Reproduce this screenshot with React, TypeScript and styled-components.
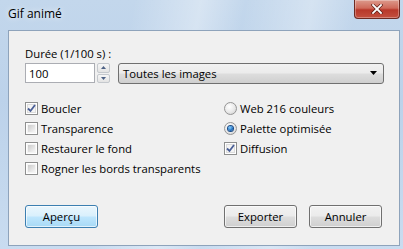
import styled, { createGlobalStyle, css } from 'styled-components'

const GlobalStyle = createGlobalStyle`
   html, body {
      margin: 0;
      padding: 0;
      background: #c4d8ee;
   }
   body {
      font-family: 'Open Sans', 'Noto Sans', sans-serif;
      font-size: 11.3px;
      color: #000;
   }
`

const Window = styled.div`
   width: 403px;
   height: 249px;
   display: flex;
   flex-direction: column;
   box-sizing: border-box;
   padding: 0 3px 3px 8px;
   background:
      linear-gradient(100deg, transparent 30%, rgba(255, 255, 255, 0.35) 45%, transparent 55%, rgba(255, 255, 255, 0.3) 70%, transparent 80%),
      linear-gradient(180deg, #c3d7ec 0%, #bcd2ea 40%, #c9dcf0 100%);
`

const TitleBar = styled.div`
   height: 30px;
   display: flex;
   align-items: flex-start;
   justify-content: space-between;
   flex-shrink: 0;
`

const Title = styled.span`
   margin-top: 5px;
   font-size: 12px;
   color: #000;
   text-shadow: 0 0 6px rgba(255, 255, 255, 0.9);
`

const CloseButton = styled.div`
   width: 46px;
   height: 19px;
   box-sizing: border-box;
   border: 1px solid #6d2a22;
   border-top: none;
   border-radius: 0 0 4px 4px;
   background: linear-gradient(180deg, #dc9a8c 0%, #cf6a5a 45%, #b8382a 55%, #c4503f 100%);
   display: flex;
   align-items: center;
   justify-content: center;
   box-shadow: inset 0 0 0 1px rgba(255, 255, 255, 0.3);
`

const Client = styled.div`
   flex: 1;
   background: #f0f0f0;
   border: 1px solid #8ea3bb;
   display: flex;
   flex-direction: column;
   padding: 14px 0 0 16px;
`

const Label = styled.div`
   height: 17px;
   line-height: 17px;
`

const InputRow = styled.div`
   display: flex;
   align-items: center;
   height: 22px;
`

const NumberBox = styled.div`
   width: 70px;
   height: 20px;
   box-sizing: border-box;
   background: #fff;
   border: 1px solid #abadb3;
   display: flex;
   align-items: center;
   padding-left: 3px;
`

const Spinner = styled.div`
   margin-left: 2px;
   width: 13px;
   height: 20px;
   display: flex;
   flex-direction: column;
   gap: 1px;
`

const SpinHalf = styled.div`
   flex: 1;
   box-sizing: border-box;
   border: 1px solid #c4c8cd;
   border-radius: 2px;
   background: linear-gradient(180deg, #f6f6f6, #e3e3e3);
   display: flex;
   align-items: center;
   justify-content: center;
`

const Select = styled.div`
   margin-left: 8px;
   width: 266px;
   height: 21px;
   box-sizing: border-box;
   border: 1px solid #707070;
   border-radius: 3px;
   background: linear-gradient(180deg, #f2f2f2 0%, #ebebeb 48%, #dddddd 52%, #cfcfcf 100%);
   display: flex;
   align-items: center;
   justify-content: space-between;
   padding: 0 6px 0 4px;
`

const Options = styled.div`
   display: grid;
   grid-template-columns: 199px 1fr;
   margin-top: 14px;
`

const Column = styled.div`
   display: flex;
   flex-direction: column;
`

const OptionRow = styled.div`
   display: flex;
   align-items: center;
   height: 20px;
   gap: 3px;
`

const boxBase = css`
   width: 13px;
   height: 13px;
   box-sizing: border-box;
   border: 1px solid #8e8f8f;
   flex-shrink: 0;
   display: flex;
   align-items: center;
   justify-content: center;
`

const CheckBox = styled.div`
   ${boxBase};
   background: #f4f4f4;
   box-shadow: inset 0 0 0 1px #fff;
   &::before {
      content: '';
      width: 7px;
      height: 7px;
      background: linear-gradient(135deg, #cbcbcb, #f6f6f6);
   }
`

const CheckedBox = styled.div`
   ${boxBase};
   position: relative;
   background: #f4f4f4;
   box-shadow: inset 0 0 0 1px #fff, inset 0 0 0 2px #dcdcdc;
`

const Radio = styled.div<{ $on?: boolean }>`
   ${boxBase};
   border-radius: 50%;
   border-color: #959595;
   background: radial-gradient(circle at 40% 35%, #ffffff 0%, #e8e8e8 55%, #c9c9c9 100%);
   &::before {
      content: '';
      width: 5px;
      height: 5px;
      border-radius: 50%;
      display: ${p => (p.$on ? 'block' : 'none')};
      background: radial-gradient(circle at 40% 35%, #8ad5ff 0%, #1e6cc0 60%, #0b3f7d 100%);
      box-shadow: 0 0 0 1px #1a4b86;
   }
`

const Buttons = styled.div`
   display: flex;
   align-items: center;
   gap: 12px;
   margin-top: 27px;
   padding-right: 17px;
`

const Button = styled.div<{ $default?: boolean }>`
   width: 73px;
   height: 23px;
   box-sizing: border-box;
   border: 1px solid ${p => (p.$default ? '#3c7fb1' : '#707070')};
   border-radius: 3px;
   background: ${p =>
      p.$default
         ? 'linear-gradient(180deg, #eaf6fd 0%, #d9f0fc 48%, #bee6fd 52%, #a7d9f5 100%)'
         : 'linear-gradient(180deg, #f2f2f2 0%, #ebebeb 48%, #dddddd 52%, #cfcfcf 100%)'};
   box-shadow: inset 0 0 0 1px rgba(255, 255, 255, 0.65);
   display: flex;
   align-items: center;
   justify-content: center;
`

const Spacer = styled.div`
   flex: 1;
`

const Check = () => (
   <svg width='9' height='9' viewBox='0 0 9 9' style={{ position: 'absolute', left: 1, top: 1 }}>
      <path d='M1 4.5 L3.5 7 L8 1' fill='none' stroke='#4a5f97' strokeWidth='1.8' />
   </svg>
)

export default function App() {
   return (
      <>
         <GlobalStyle />
         <Window>
            <TitleBar>
               <Title>Gif animé</Title>
               <CloseButton>
                  <svg width='12' height='10' viewBox='0 0 12 10'>
                     <path d='M2 1 L10 9 M10 1 L2 9' stroke='#5a1c14' strokeWidth='3.2' strokeLinecap='square' />
                     <path d='M2 1 L10 9 M10 1 L2 9' stroke='#fff' strokeWidth='1.8' strokeLinecap='square' />
                  </svg>
               </CloseButton>
            </TitleBar>
            <Client>
               <Label>Durée (1/100 s) :</Label>
               <InputRow>
                  <NumberBox>100</NumberBox>
                  <Spinner>
                     <SpinHalf>
                        <svg width='5' height='3' viewBox='0 0 5 3'>
                           <path d='M0 3 L2.5 0 L5 3 Z' fill='#4d6185' />
                        </svg>
                     </SpinHalf>
                     <SpinHalf>
                        <svg width='5' height='3' viewBox='0 0 5 3'>
                           <path d='M0 0 L2.5 3 L5 0 Z' fill='#4d6185' />
                        </svg>
                     </SpinHalf>
                  </Spinner>
                  <Select>
                     <span>Toutes les images</span>
                     <svg width='7' height='4' viewBox='0 0 7 4'>
                        <path d='M0 0 L7 0 L3.5 4 Z' fill='#000' />
                     </svg>
                  </Select>
               </InputRow>
               <Options>
                  <Column>
                     <OptionRow>
                        <CheckedBox>
                           <Check />
                        </CheckedBox>
                        Boucler
                     </OptionRow>
                     <OptionRow>
                        <CheckBox />
                        Transparence
                     </OptionRow>
                     <OptionRow>
                        <CheckBox />
                        Restaurer le fond
                     </OptionRow>
                     <OptionRow>
                        <CheckBox />
                        Rogner les bords transparents
                     </OptionRow>
                  </Column>
                  <Column>
                     <OptionRow>
                        <Radio />
                        Web 216 couleurs
                     </OptionRow>
                     <OptionRow>
                        <Radio $on />
                        Palette optimisée
                     </OptionRow>
                     <OptionRow>
                        <CheckedBox>
                           <Check />
                        </CheckedBox>
                        Diffusion
                     </OptionRow>
                  </Column>
               </Options>
               <Buttons>
                  <Button $default>Aperçu</Button>
                  <Spacer />
                  <Button>Exporter</Button>
                  <Button>Annuler</Button>
               </Buttons>
            </Client>
         </Window>
      </>
   )
}
